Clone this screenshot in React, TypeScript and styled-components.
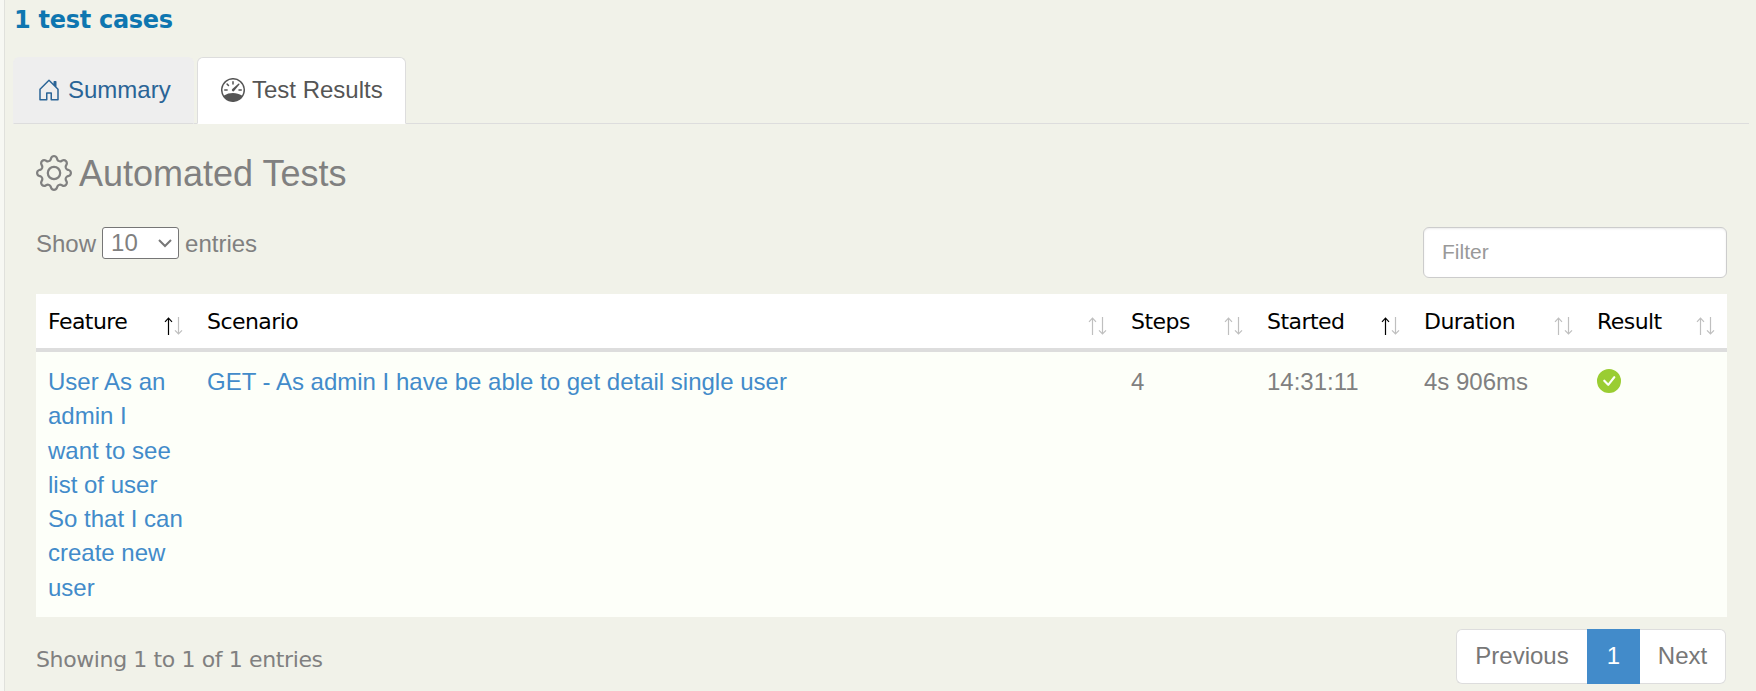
import React from "react";
import styled, { createGlobalStyle } from "styled-components";
import {
  BsCheckCircleFill,
  BsGear,
  BsHouseDoor,
  BsSpeedometer,
} from "react-icons/bs";

const verdana = `Verdana, "DejaVu Sans", sans-serif`;

const GlobalStyle = createGlobalStyle`
  *, *::before, *::after { box-sizing: border-box; }
  body {
    margin: 0;
    background: #f1f2e9;
    color: #808080;
    font: 24px/34.28px "Liberation Sans", Arial, sans-serif;
    overflow: hidden;
  }
`;

const Page = styled.div`
  height: 691px;
  padding: 0 7px 0 8px;
  margin-left: 4px;
  border-left: 1px solid #e0e1dc;
  box-shadow: -4px 0 0 #f7f8f3;
  overflow: hidden;
`;

const CaseCount = styled.h1`
  margin: 0;
  height: 57px;
  padding: 3px 0 0 1px;
  font: bold 24px/34px ${verdana};
  letter-spacing: -0.28px;
  color: #0e76b0;
`;

const Tabs = styled.nav`
  display: flex;
  gap: 3px;
  height: 67px;
  border-bottom: 1px solid #dddddd;
`;

const Tab = styled.a<{ $active?: boolean }>`
  display: flex;
  align-items: center;
  height: 67px;
  width: ${(p) => (p.$active ? 209 : 181)}px;
  padding: 0 0 1px 23px;
  gap: 7px;
  border-radius: 6px 6px 0 0;
  border: 1px solid ${(p) => (p.$active ? "#dddddd" : "#eeeeee")};
  border-bottom-color: ${(p) => (p.$active ? "#ffffff" : "#dddddd")};
  background: ${(p) => (p.$active ? "#ffffff" : "#eeeeee")};
  color: ${(p) => (p.$active ? "#555555" : "#2a6496")};
  white-space: nowrap;

  svg {
    margin-top: -1px;
  }
`;

const Panel = styled.section`
  width: 1691px;
  margin-left: 23px;
`;

const Heading = styled.h2`
  display: flex;
  align-items: center;
  gap: 7px;
  height: 40px;
  margin: 29px 0 34px;
  font-size: 36px;
  font-weight: normal;
  line-height: 40px;

  span {
    padding-top: 2px;
  }
`;

const Toolbar = styled.div`
  display: flex;
  justify-content: space-between;
  align-items: flex-start;
  height: 67px;
`;

const LengthLabel = styled.label`
  display: flex;
  align-items: center;
  gap: 6px;
  height: 34px;
`;

const SelectBox = styled.span`
  position: relative;
  display: block;
  width: 77px;
  height: 32px;
  margin-top: -2px;

  svg {
    position: absolute;
    right: 7px;
    top: 12px;
    pointer-events: none;
  }
`;

const Select = styled.select`
  appearance: none;
  display: block;
  width: 100%;
  height: 100%;
  padding: 0 0 0 8px;
  border: 1px solid #767676;
  border-radius: 3px;
  background: #ffffff;
  color: inherit;
  font: inherit;
  line-height: 30px;
`;

const Filter = styled.input`
  width: 304px;
  height: 51px;
  padding: 0 18px 2px;
  border: 1px solid #cccccc;
  border-radius: 6px;
  background: #ffffff;
  box-shadow: inset 0 1px 2px rgba(0, 0, 0, 0.08);
  font: 21px "Liberation Sans", Arial, sans-serif;

  &::placeholder {
    color: #999999;
    opacity: 1;
  }
`;

const Table = styled.table`
  width: 1691px;
  table-layout: fixed;
  border-collapse: separate;
  border-spacing: 0;
`;

const HeadCell = styled.th<{ $width: number }>`
  width: ${(p) => p.$width}px;
  height: 58px;
  padding: 1px 12px 0;
  border-bottom: 4px solid #dddddd;
  background: #ffffff;
  color: #000000;
  font: normal 22px/30px ${verdana};
  text-align: left;
`;

const HeadContent = styled.div`
  display: flex;
  justify-content: space-between;
  align-items: center;
  padding-top: 1px;
  letter-spacing: -0.55px;
`;

const SortArrows = styled.svg`
  flex: none;
  margin-top: 8px;
`;

const Cell = styled.td`
  height: 265px;
  padding: 13px 12px 11px;
  background: #fdfff9;
  vertical-align: top;
`;

const Link = styled.a`
  color: #428bca;
`;

const PassIcon = styled(BsCheckCircleFill)`
  display: block;
  margin-top: 4px;
  color: #9acd32;
`;

const Footer = styled.footer`
  display: flex;
  justify-content: space-between;
  align-items: flex-start;
  padding: 12px 1px 0 0;
`;

const Info = styled.div`
  padding-top: 14px;
  font: 22px/34px ${verdana};
  letter-spacing: -0.38px;
`;

const Pagination = styled.div`
  display: flex;
  height: 55px;
`;

const PageButton = styled.a<{ $width: number; $current?: boolean }>`
  width: ${(p) => p.$width}px;
  padding-top: 9px;
  text-align: center;
  border: 1px solid ${(p) => (p.$current ? "#428bca" : "#dddddd")};
  background: ${(p) => (p.$current ? "#428bca" : "#ffffff")};
  color: ${(p) => (p.$current ? "#ffffff" : "#777777")};

  &:first-child {
    border-right: 0;
    border-radius: 6px 0 0 6px;
  }
  &:last-child {
    border-left: 0;
    border-radius: 0 6px 6px 0;
  }
`;

type Column = { label: string; width: number; sorted?: boolean };

const columns: Column[] = [
  { label: "Feature", width: 159, sorted: true },
  { label: "Scenario", width: 924 },
  { label: "Steps", width: 136 },
  { label: "Started", width: 157, sorted: true },
  { label: "Duration", width: 173 },
  { label: "Result", width: 142 },
];

function Arrows({ sorted }: { sorted?: boolean }) {
  return (
    <SortArrows width="19" height="18" viewBox="0 0 19 18" fill="none">
      <g stroke={sorted ? "#000000" : "#bfbfbf"} strokeWidth="1.2">
        <path d="M4.5 1v17M1 4.8L4.5 1.2L8 4.8" />
      </g>
      <g stroke="#bfbfbf" strokeWidth="1.2">
        <path d="M14.5 0v17M11 13.4l3.5 3.6l3.5-3.6" />
      </g>
    </SortArrows>
  );
}

export default function App() {
  return (
    <>
      <GlobalStyle />
      <Page>
        <CaseCount>1 test cases</CaseCount>
        <Tabs>
          <Tab>
            <BsHouseDoor size={24} />
            Summary
          </Tab>
          <Tab $active>
            <BsSpeedometer size={24} />
            Test Results
          </Tab>
        </Tabs>
        <Panel>
          <Heading>
            <BsGear size={36} />
            <span>Automated Tests</span>
          </Heading>
          <Toolbar>
            <LengthLabel>
              Show
              <SelectBox>
                <Select defaultValue="10">
                  <option>10</option>
                  <option>25</option>
                </Select>
                <svg width="14" height="9" viewBox="0 0 14 9" fill="none">
                  <path d="M1 1l6 6l6-6" stroke="#777777" strokeWidth="2" />
                </svg>
              </SelectBox>
              entries
            </LengthLabel>
            <Filter placeholder="Filter" />
          </Toolbar>
          <Table>
            <thead>
              <tr>
                {columns.map((c) => (
                  <HeadCell key={c.label} $width={c.width}>
                    <HeadContent>
                      {c.label}
                      <Arrows sorted={c.sorted} />
                    </HeadContent>
                  </HeadCell>
                ))}
              </tr>
            </thead>
            <tbody>
              <tr>
                <Cell>
                  <Link>
                    User As an admin I
                    <br />
                    want to see list of user
                    <br />
                    So that I can create new user
                  </Link>
                </Cell>
                <Cell>
                  <Link>
                    GET - As admin I have be able to get detail single user
                  </Link>
                </Cell>
                <Cell>4</Cell>
                <Cell>14:31:11</Cell>
                <Cell>4s 906ms</Cell>
                <Cell>
                  <PassIcon size={24} />
                </Cell>
              </tr>
            </tbody>
          </Table>
          <Footer>
            <Info>Showing 1 to 1 of 1 entries</Info>
            <Pagination>
              <PageButton $width={131}>Previous</PageButton>
              <PageButton $width={53} $current>
                1
              </PageButton>
              <PageButton $width={86}>Next</PageButton>
            </Pagination>
          </Footer>
        </Panel>
      </Page>
    </>
  );
}
